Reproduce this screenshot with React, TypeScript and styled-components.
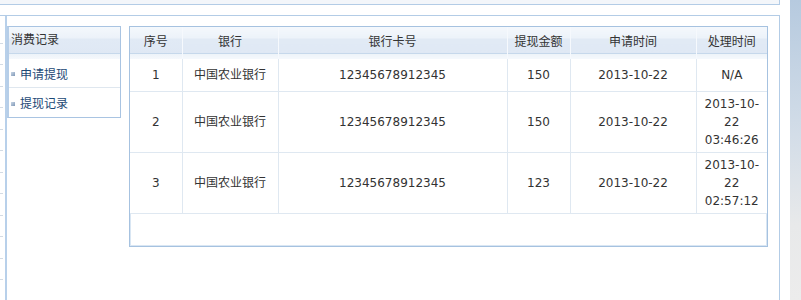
import React from 'react';
import styled, { createGlobalStyle, css } from 'styled-components';

const GlobalStyle = createGlobalStyle`
  html, body {
    margin: 0;
    padding: 0;
    background: #fff;
  }
  body {
    font-family: "DejaVu Sans", "Noto Sans CJK SC", sans-serif;
    font-size: 12px;
    color: #333;
  }
`;

const headBar = css`
  background: linear-gradient(
    to bottom,
    #f4f8fc 0px,
    #ecf2f9 11px,
    #e1eaf5 12px,
    #dfe8f4 26px,
    #c6d8eb 26px,
    #c6d8eb 27px,
    #edf3f9 27px,
    #f5f8fc 32px
  );
`;

const Page = styled.div`
  display: flex;
  height: 300px;
  overflow: hidden;
`;

const Frame = styled.div`
  width: 780px;
  display: flex;
  flex-direction: column;
`;

const TopBar = styled.div`
  height: 4px;
  background: #f3f6fa;
  border-bottom: 1px solid #b3cce6;
  border-right: 1px solid #b3cce6;
`;

const Body = styled.div`
  margin-top: 10px;
  flex: 1;
  display: flex;
  border-top: 1px solid #b3cce6;
  border-right: 1px solid #b3cce6;
`;

const Stub = styled.div`
  width: 5px;
  padding-top: 6px;
  display: flex;
  flex-direction: column;
`;

const Tick = styled.div`
  width: 3px;
  height: 21.5px;
  flex-shrink: 0;
  box-sizing: border-box;
  border-bottom: 1px solid #d3dbe4;
`;

const Panel = styled.div`
  flex: 1;
  display: flex;
  align-items: flex-start;
  gap: 8px;
  padding: 10px 0 0;
  border-left: 2px solid #b8d0ea;
`;

const Sidebar = styled.div`
  width: 114px;
  box-sizing: border-box;
  border: 1px solid #a9c4e2;
  border-left: 2px solid #b6cee8;
`;

const SideHead = styled.div`
  ${headBar};
  height: 32px;
  line-height: 26px;
  padding-left: 2px;
`;

const SideItem = styled.div`
  display: flex;
  align-items: center;
  gap: 5px;
  height: 28px;
  padding-left: 2px;
  color: #1c4875;
  & + & {
    border-top: 1px solid #dfe7ef;
    height: 29px;
  }
`;

const Bullet = styled.span`
  width: 4px;
  height: 4px;
  margin-top: 2px;
  background: linear-gradient(135deg, #c9d6e6, #7f98b6);
`;

const TableBox = styled.div`
  width: 639px;
  height: 221px;
  box-sizing: border-box;
  border: 1px solid #a6c2e0;
  box-shadow: inset 0 0 0 1px #d9e6f3;
`;

const Grid = styled.table`
  width: 637px;
  table-layout: fixed;
  border-collapse: collapse;
  background: #fff;
`;

const Th = styled.th`
  ${headBar};
  height: 32px;
  padding: 0 0 6px;
  box-sizing: border-box;
  font-weight: normal;
  color: #333;
  border-right: 1px solid #f6f9fd;
  &:last-child {
    border-right: none;
  }
`;

const Td = styled.td`
  height: 32px;
  box-sizing: border-box;
  padding: 3px 3px;
  line-height: 18px;
  text-align: center;
  vertical-align: middle;
  border-bottom: 1px solid #dfe8f1;
  border-right: 1px solid #dfe8f1;
  &:last-child {
    border-right: none;
  }
`;

const Strip = styled.div`
  width: 11px;
  margin-left: 10px;
  background: linear-gradient(to bottom, #b6cadf 0%, #d3dde8 45%, #e8e9ea 75%, #ececec 100%);
`;

const columns = [
  { title: '序号', width: 52 },
  { title: '银行', width: 96 },
  { title: '银行卡号', width: 229 },
  { title: '提现金额', width: 63 },
  { title: '申请时间', width: 126 },
  { title: '处理时间', width: 71 },
];

const records = [
  { id: 1, bank: '中国农业银行', card: '12345678912345', amount: 150, applied: '2013-10-22', handled: 'N/A' },
  { id: 2, bank: '中国农业银行', card: '12345678912345', amount: 150, applied: '2013-10-22', handled: '2013-10-22 03:46:26' },
  { id: 3, bank: '中国农业银行', card: '12345678912345', amount: 123, applied: '2013-10-22', handled: '2013-10-22 02:57:12' },
];

// let long timestamps wrap after the hyphens like the old page did
const breakable = (s: string) => s.split('-').join('-\u200B');

const App = () => {
  return (
    <Page>
      <GlobalStyle />
      <Frame>
        <TopBar />
        <Body>
          <Stub>
            {Array.from({ length: 12 }).map((_, i) => (
              <Tick key={i} />
            ))}
          </Stub>
          <Panel>
            <Sidebar>
              <SideHead>消费记录</SideHead>
              <SideItem>
                <Bullet />
                申请提现
              </SideItem>
              <SideItem>
                <Bullet />
                提现记录
              </SideItem>
            </Sidebar>
            <TableBox>
              <Grid>
                <colgroup>
                  {columns.map((c) => (
                    <col key={c.title} style={{ width: c.width }} />
                  ))}
                </colgroup>
                <thead>
                  <tr>
                    {columns.map((c) => (
                      <Th key={c.title}>{c.title}</Th>
                    ))}
                  </tr>
                </thead>
                <tbody>
                  {records.map((r) => (
                    <tr key={r.id}>
                      <Td>{r.id}</Td>
                      <Td>{r.bank}</Td>
                      <Td>{r.card}</Td>
                      <Td>{r.amount}</Td>
                      <Td>{r.applied}</Td>
                      <Td>{breakable(r.handled)}</Td>
                    </tr>
                  ))}
                </tbody>
              </Grid>
            </TableBox>
          </Panel>
        </Body>
      </Frame>
      <Strip />
    </Page>
  );
};

export default App;
